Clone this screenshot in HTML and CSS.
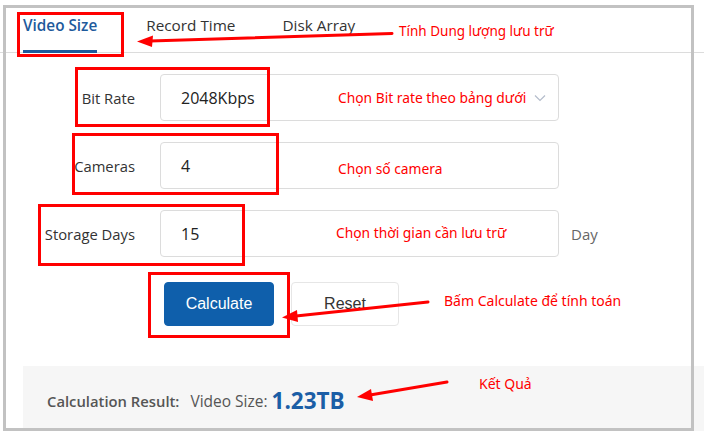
FILE: index.html
```html
<!DOCTYPE html>
<html lang="en">
<head>
<meta charset="utf-8">
<title>Video Size</title>
<link rel="stylesheet" href="styles.css">
</head>
<body>
<div class="page">
  <nav class="tabs">
    <span class="tab active">Video Size</span>
    <span class="tab">Record Time</span>
    <span class="tab">Disk Array</span>
  </nav>

  <form class="form">
    <label class="label">Bit Rate</label>
    <div class="field select">
      <span class="value">2048Kbps</span>
      <svg class="chevron" width="12" height="8" viewBox="0 0 12 8"><path d="M1 1.5 L6 6.5 L11 1.5" fill="none" stroke="#b4bccb" stroke-width="1.2"/></svg>
    </div>
    <span></span>

    <label class="label">Cameras</label>
    <div class="field"><span class="value">4</span></div>
    <span></span>

    <label class="label">Storage Days</label>
    <div class="field"><span class="value">15</span></div>
    <span class="unit">Day</span>
  </form>

  <div class="actions">
    <button type="button" class="btn primary">Calculate</button>
    <button type="button" class="btn">Reset</button>
  </div>

  <div class="result">
    <span class="result-title">Calculation Result:</span>
    <span class="result-label">Video Size:</span>
    <span class="result-value">1.23TB</span>
  </div>

  <!-- annotation overlays -->
  <div class="frame"></div>
  <div class="mark m-tab"></div>
  <div class="mark m-bitrate"></div>
  <div class="mark m-cameras"></div>
  <div class="mark m-days"></div>
  <div class="mark m-calc"></div>

  <svg class="arrows" width="704" height="441" viewBox="0 0 704 441">
    <g stroke="#f00" stroke-width="3" fill="#f00" stroke-linecap="round">
      <line x1="392" y1="33.5" x2="150" y2="41"/>
      <polygon points="137,41.5 153,35.5 152,47" stroke="none"/>
      <line x1="428" y1="302" x2="296" y2="316"/>
      <polygon points="282,317.5 297,310 298,322" stroke="none"/>
      <line x1="447" y1="382" x2="370" y2="395"/>
      <polygon points="357,397 371,389 373,401" stroke="none"/>
    </g>
  </svg>

  <div class="note n-tab">Tính Dung lượng lưu trữ</div>
  <div class="note n-bitrate">Chọn Bit rate theo bảng dưới</div>
  <div class="note n-cameras">Chọn số camera</div>
  <div class="note n-days">Chọn thời gian cần lưu trữ</div>
  <div class="note n-calc">Bấm Calculate để tính toán</div>
  <div class="note n-result">Kết Quả</div>
</div>
</body>
</html>
```

FILE: styles.css
```css
* { box-sizing: border-box; }

html, body {
  margin: 0;
  padding: 0;
  background: #fff;
}

body {
  width: 704px;
  height: 441px;
  overflow: hidden;
  font-family: "Open Sans", "Noto Sans", sans-serif;
  color: #333;
}

.page {
  position: relative;
  width: 704px;
  height: 441px;
}

/* Tabs */
.tabs {
  display: flex;
  align-items: flex-end;
  height: 53px;
  padding-left: 23px;
  border-bottom: 1px solid #dcdcdc;
}

.tab {
  font-size: 15.3px;
  line-height: 20px;
  padding-bottom: 17px;
  margin-right: 47px;
  color: #333;
  white-space: nowrap;
}

.tab.active {
  color: #1e5a9c;
  font-weight: 600;
  padding-bottom: 15px;
  margin-right: 49px;
  margin-bottom: -1px;
  border-bottom: 3px solid #1e5a9c;
}

/* Form */
.form {
  display: grid;
  grid-template-columns: 135px 399px auto;
  column-gap: 25px;
  row-gap: 21px;
  margin-top: 21px;
  align-items: center;
}

.label {
  font-size: 14.8px;
  text-align: right;
  color: #333;
  white-space: nowrap;
}

.field {
  height: 47px;
  border: 1px solid #dcdcdc;
  border-radius: 4px;
  display: flex;
  align-items: center;
  padding-left: 20px;
  padding-right: 12px;
}

.field .value {
  font-size: 16px;
  color: #222;
}

.select {
  justify-content: space-between;
}

.chevron {
  display: block;
}

.unit {
  font-size: 15px;
  color: #666;
  margin-left: -13px;
}

/* Buttons */
.actions {
  display: flex;
  gap: 17px;
  padding-left: 164px;
  margin-top: 25px;
}

.btn {
  height: 44px;
  width: 108px;
  border: 1px solid #e6e6e6;
  border-radius: 4px;
  background: #fff;
  font-family: "Liberation Sans", Arial, sans-serif;
  font-size: 16px;
  color: #333;
  padding: 0;
}

.btn.primary {
  width: 110px;
  background: #0f5fab;
  border-color: #0f5fab;
  color: #fff;
}

/* Result */
.result {
  margin-top: 40px;
  margin-left: 23px;
  height: 65px;
  background: #f6f6f6;
  display: flex;
  align-items: center;
  padding-left: 24px;
  padding-top: 4px;
}

.result-title {
  font-size: 14.8px;
  font-weight: 600;
  color: #555;
  margin-right: 11px;
}

.result-label {
  font-size: 15.5px;
  color: #555;
  margin-right: 4px;
}

.result-value {
  font-size: 22.5px;
  font-weight: 700;
  color: #1b5ea6;
}

/* Annotation overlays */
.frame {
  position: absolute;
  left: 3px;
  top: 5px;
  width: 691px;
  height: 426px;
  border: 3px solid #c2c2c2;
}

.mark {
  position: absolute;
  border: 3px solid #f00;
}

.m-tab { left: 17px; top: 12px; width: 107px; height: 45px; }
.m-bitrate { left: 75px; top: 67px; width: 195px; height: 60px; }
.m-cameras { left: 72px; top: 133px; width: 207px; height: 62px; }
.m-days { left: 38px; top: 204px; width: 207px; height: 62px; }
.m-calc { left: 148px; top: 272px; width: 142px; height: 66px; }

.arrows {
  position: absolute;
  left: 0;
  top: 0;
}

.note {
  position: absolute;
  font-family: "Noto Sans", "Open Sans", sans-serif;
  font-size: 13.8px;
  line-height: 18px;
  color: #f00;
  white-space: nowrap;
}

.n-tab { left: 399px; top: 22px; font-size: 13.5px; }
.n-bitrate { left: 338px; top: 89px; }
.n-cameras { left: 338px; top: 160px; }
.n-days { left: 336px; top: 224px; }
.n-calc { left: 444px; top: 292px; font-size: 14px; }
.n-result { left: 479px; top: 375px; font-size: 14px; }
```
